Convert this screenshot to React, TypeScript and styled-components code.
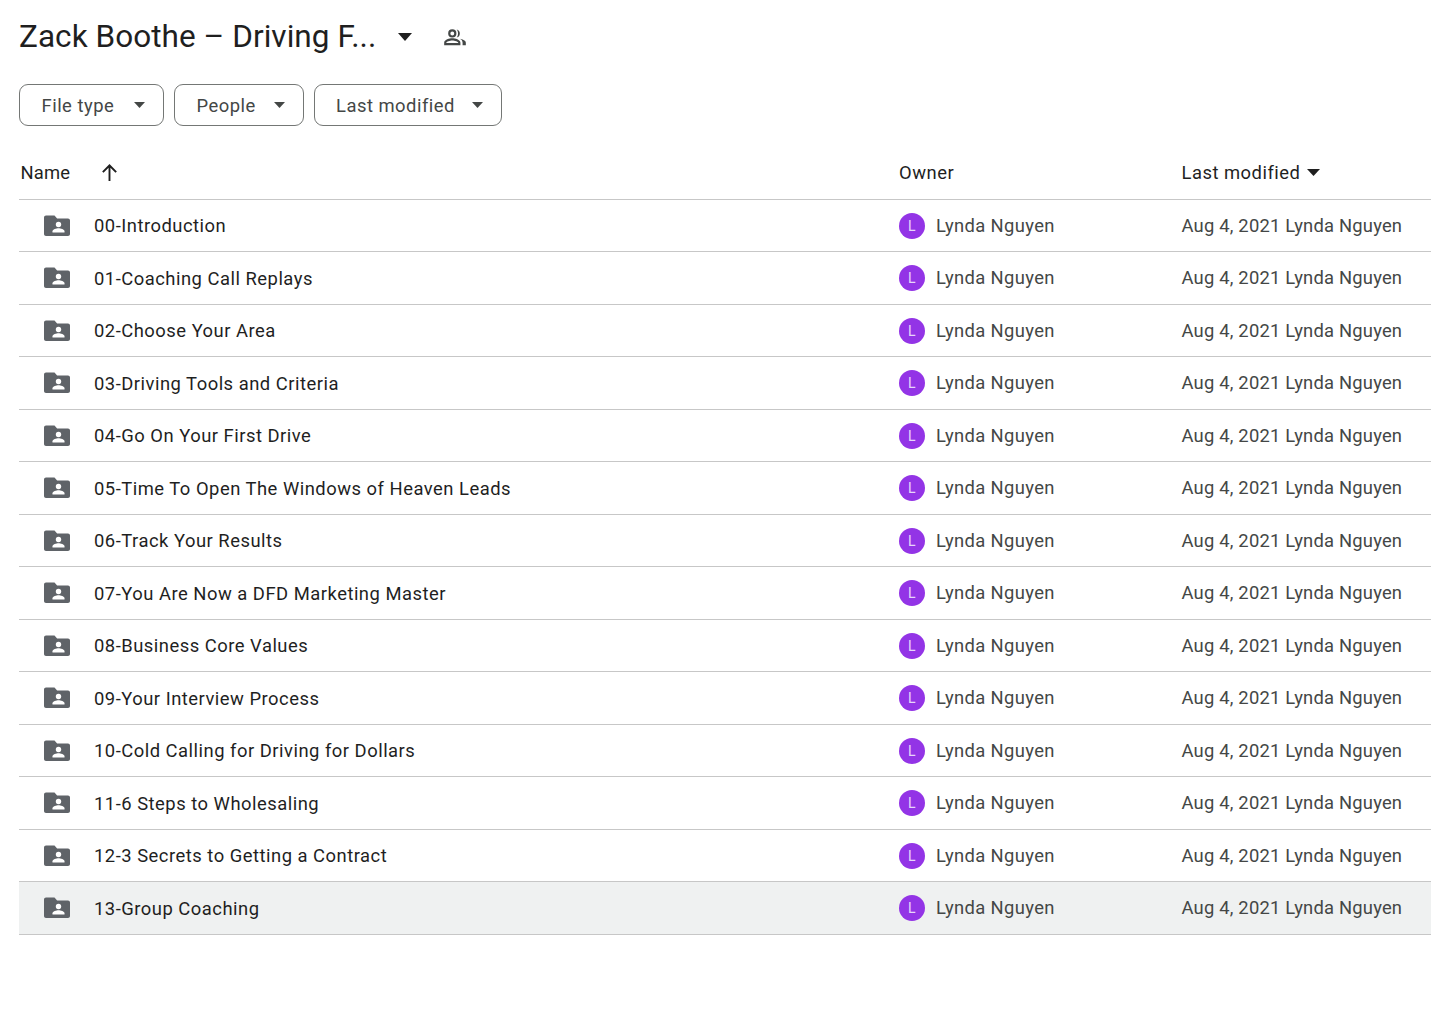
import React from "react";
import styled, { createGlobalStyle } from "styled-components";

const Global = createGlobalStyle`
  html, body { margin: 0; padding: 0; background: #fff; }
  body { font-family: Roboto, "Noto Sans", Arial, sans-serif; color: #1f1f1f; }
`;
const Page = styled.div`
  width: 1431px; height: 1009px; overflow: hidden; padding: 0 0 0 19px; box-sizing: border-box;
`;
const TitleBar = styled.div`
  display: flex; align-items: center; height: 73px;
`;
const Title = styled.h1`
  margin: 0; font-size: 31.5px; font-weight: 400; color: #1f1f1f; width: 378px; white-space: nowrap; line-height: 40px; letter-spacing: 0.05px;
`;
const TitleCaret = styled.svg`
  width: 16px; height: 8px; margin-right: 30px; fill: #1f1f1f; flex: none;
`;
const ShareIcon = styled.svg`
  width: 26px; height: 26px; fill: #444746; flex: none; margin-left: -1px;
`;
const Filters = styled.div`
  display: flex; gap: 10px; margin-top: 11px; height: 42px;
`;
const Chip = styled.button<{ $w: number }>`
  display: flex; align-items: center; justify-content: space-between; box-sizing: border-box;
  width: ${p => p.$w}px; height: 42px; padding: 0 18px 0 21.5px; border: 1px solid #747775; border-radius: 9px;
  background: #fff; color: #444746; font: 400 18.4px Roboto, sans-serif; letter-spacing: 0.5px;
`;
const ChipCaret = styled.svg`
  width: 11px; height: 6px; fill: #444746; flex: none;
`;
const Table = styled.div`
  margin-top: 20px;
`;
const RowGrid = styled.div<{ $active?: boolean; $head?: boolean }>`
  display: grid; grid-template-columns: 880px 282.5px 1fr; align-items: center; box-sizing: border-box;
  height: ${p => (p.$head ? "53.5px" : "52.5px")}; border-bottom: 1px solid #c7c7c7;
  background: ${p => (p.$active ? "#eff1f1" : "transparent")};
  ${p => p.$active ? "border-top: 1px solid #c7c7c7; margin-top: -1px; height: 53.5px;" : ""}
`;
const HeadCell = styled.div`
  display: flex; align-items: center; font-size: 18.4px; font-weight: 400; color: #1f1f1f; letter-spacing: 0.5px; white-space: nowrap;
`;
const NameHead = styled(HeadCell)`
  padding-left: 1.5px; letter-spacing: 0.2px;
`;
const SortIcon = styled.svg`
  width: 21px; height: 21px; fill: #1f1f1f; margin-left: 29px;
`;
const SortCaret = styled.svg`
  width: 13px; height: 7px; fill: #1f1f1f; margin-left: 7px;
`;
const NameCell = styled.div`
  display: flex; align-items: center; padding: 1px 0 0 25px; font-size: 18.4px; font-weight: 400; color: #1f1f1f; letter-spacing: 0.5px; white-space: nowrap;
`;
const FolderIcon = styled.svg`
  width: 26px; height: 22px; flex: none; margin-right: 24px;
`;
const OwnerCell = styled.div`
  display: flex; align-items: center; color: #444746; font-size: 18.4px; letter-spacing: 0.35px; white-space: nowrap;
`;
const Avatar = styled.span`
  width: 26px; height: 26px; border-radius: 50%; background: #9334e6; color: #e6d6fa; display: flex; align-items: center; justify-content: center;
  font-size: 14px; margin: 1px 11px 0 0; flex: none;
`;
const ModCell = styled.div`
  color: #444746; font-size: 18.4px; letter-spacing: 0.2px; white-space: nowrap;
`;

const folders = [
  "00-Introduction", "01-Coaching Call Replays", "02-Choose Your Area", "03-Driving Tools and Criteria",
  "04-Go On Your First Drive", "05-Time To Open The Windows of Heaven Leads", "06-Track Your Results",
  "07-You Are Now a DFD Marketing Master", "08-Business Core Values", "09-Your Interview Process",
  "10-Cold Calling for Driving for Dollars", "11-6 Steps to Wholesaling", "12-3 Secrets to Getting a Contract", "13-Group Coaching",
];

const Folder = () => (
  <FolderIcon viewBox="0 0 26 22">
    <path fill="#5f6368" d="M2 0.5h8.5l2.6 3H24c1.1 0 2 .9 2 2V19c0 1.1-.9 2-2 2H2c-1.1 0-2-.9-2-2V2.500C0 1.400.9.500 2 .5z" />
    <circle cx="14.500" cy="9.500" r="2.700" fill="#fff" />
    <path fill="#fff" d="M8.500 17.500v-1.300c0-2 3.900-3 6-3s6 1 6 3v1.300z" />
  </FolderIcon>
);

export default function App() {
  return (
    <Page>
      <Global />
      <TitleBar>
        <Title>Zack Boothe – Driving F...</Title>
        <TitleCaret viewBox="0 0 16 8"><path d="M1 0h14L8 8z" /></TitleCaret>
        <ShareIcon viewBox="0 0 24 24">
          <path d="M9.500 12.500a3.800 3.800 0 1 0 0-7.600 3.800 3.800 0 0 0 0 7.600zm0-5.600a1.800 1.800 0 1 1 0 3.600 1.800 1.800 0 0 1 0-3.600zM2 19.500v-2.300c0-2.700 5-4 7.500-4s7.500 1.300 7.500 4v2.300zm2-2h11v-.3c0-.9-3.300-2-5.500-2s-5.500 1.100-5.500 2z" />
          <path d="M13.500 5a3.800 3.800 0 0 1 0 7.400c.9-1 1.300-2.300 1.300-3.700S14.400 6 13.500 5zM16.500 13.700c1.700.4 5.500 1.500 5.500 3.500v2.300h-3v-2.300c0-1.500-1-2.700-2.500-3.500z" />
        </ShareIcon>
      </TitleBar>
      <Filters>
        {([["File type", 145], ["People", 129.5], ["Last modified", 188.5]] as [string, number][]).map(([label, w]) => (
          <Chip key={label} $w={w}>
            {label}
            <ChipCaret viewBox="0 0 11 6"><path d="M0 0h11L5.500 6z" /></ChipCaret>
          </Chip>
        ))}
      </Filters>
      <Table>
        <RowGrid $head>
          <NameHead>
            Name
            <SortIcon viewBox="0 0 20 20"><path d="M9.100 18V5.400L4.300 10.200 3 9l7-7 7 7-1.300 1.200-4.800-4.800V18z" /></SortIcon>
          </NameHead>
          <HeadCell>Owner</HeadCell>
          <HeadCell>
            Last modified
            <SortCaret viewBox="0 0 13 7"><path d="M0 0h13L6.500 7z" /></SortCaret>
          </HeadCell>
        </RowGrid>
        {folders.map((name, i) => (
          <RowGrid key={name} $active={i === folders.length - 1}>
            <NameCell><Folder />{name}</NameCell>
            <OwnerCell><Avatar>L</Avatar>Lynda Nguyen</OwnerCell>
            <ModCell>Aug 4, 2021 Lynda Nguyen</ModCell>
          </RowGrid>
        ))}
      </Table>
    </Page>
  );
}
